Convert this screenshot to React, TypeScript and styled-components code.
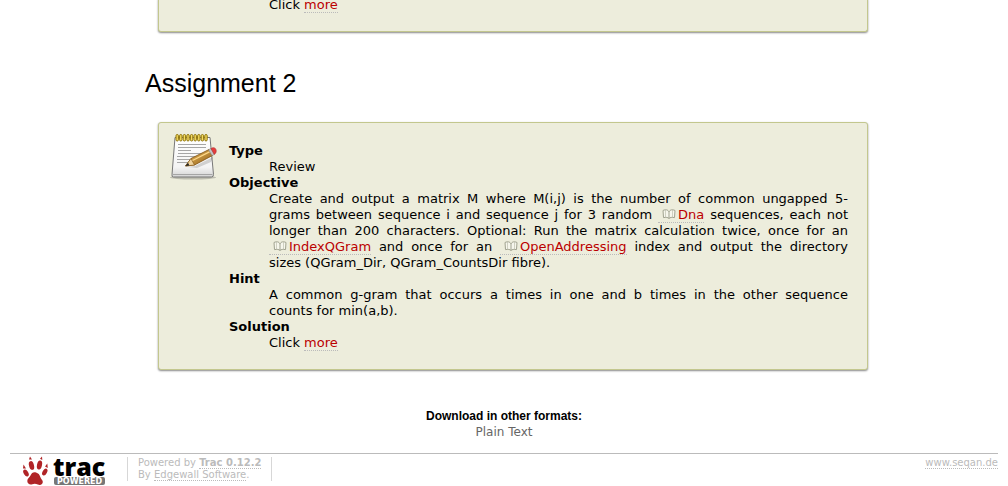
import React from "react";
import styled, { createGlobalStyle } from "styled-components";

const GlobalStyle = createGlobalStyle`
  body {
    margin: 0;
    background: #fff;
    color: #000;
    font: 13px/16px Verdana, "DejaVu Sans", sans-serif;
  }
`;

const Page = styled.div`
  padding: 0 10px;
  overflow: hidden;
`;

const Wiki = styled.main`
  margin: 0 130px 0 135px;
`;

const Card = styled.section<{ $continued?: boolean }>`
  display: flex;
  margin: 0 0 0 13px;
  padding: ${(p) => (p.$continued ? "0 19px 18px 11px" : "10px 19px 18px 11px")};
  margin-top: ${(p) => (p.$continued ? "-3px" : "0")};
  border: 1px solid #c3c78e;
  border-top-width: ${(p) => (p.$continued ? "0" : "1px")};
  border-radius: 3px;
  background: #ededdc;
  box-shadow: 0 1px 2px #888;
`;

const IconColumn = styled.div`
  flex: 0 0 59px;
`;

const Details = styled.dl<{ $continued?: boolean }>`
  flex: 1;
  margin: ${(p) => (p.$continued ? "0" : "10px 0 0")};
`;

const Term = styled.dt`
  font-weight: bold;
`;

const Description = styled.dd`
  margin: 0 0 0 40px;
`;

const Line = styled.span`
  display: block;
  text-align: justify;
  text-align-last: justify;
`;

const WikiLink = styled.a`
  color: #b00;
  text-decoration: none;
  white-space: nowrap;
  border-bottom: 1px dotted #bbb;
`;

const BookSvg = styled.svg`
  width: 14px;
  height: 10px;
  margin: 0 2px 0 4px;
`;

const Heading = styled.h2`
  margin: 36px 0 24px;
  font: 25px/30px Arial, "Liberation Sans", sans-serif;
`;

const Formats = styled.section`
  margin: 38px 0 13px;
  text-align: center;
`;

const FormatsTitle = styled.h3`
  margin: 0;
  font: bold 12px/16px Arial, "Liberation Sans", sans-serif;
`;

const FormatLink = styled.a`
  display: block;
  color: #666;
  font-size: 12px;
  text-decoration: none;
`;

const Footer = styled.footer`
  display: flex;
  align-items: flex-start;
  border-top: 1px solid #bbb;
  padding-top: 2px;
  color: #bbb;
  font-size: 10px;
  line-height: 12px;
`;

const Logo = styled.a`
  display: block;
  width: 107px;
  height: 30px;
`;

const Powered = styled.p`
  margin: 1px 0 0 10px;
  padding: 0 10px;
  border: solid #d7d7d7;
  border-width: 0 1px;
`;

const Site = styled.p`
  margin: 1px 0 0 auto;
`;

const FooterLink = styled.a`
  color: #bbb;
  text-decoration: none;
  border-bottom: 1px dotted #bbb;
`;

const Book = () => (
  <BookSvg viewBox="0 0 14 10" fill="#f6f6ec" stroke="#a0a28f" strokeLinejoin="round" aria-hidden="true">
    <path d="M7 9.500C6 8.300 4 8.200 1.500 8.600L1 1.500C3.500 .3 6 .5 7 3 8 .5 10.500 .3 13 1.500l-.5 7.100C10 8.200 8 8.300 7 9.500z" />
    <path d="M7 3v6.500" />
    <path d="M3.500 1.200V8M10.500 1.200V8" strokeOpacity=".45" />
  </BookSvg>
);

const NotepadIcon = () => (
  <svg width="48" height="48" viewBox="0 0 48 48" aria-hidden="true">
    <defs>
      <linearGradient id="paper" x2="0" y2="1">
        <stop stopColor="#fff" />
        <stop offset=".75" stopColor="#f4f4f4" />
        <stop offset="1" stopColor="#d4d4d4" />
      </linearGradient>
      <linearGradient id="wood" x2="1" y2="1">
        <stop stopColor="#f0c266" />
        <stop offset="1" stopColor="#8e5b13" />
      </linearGradient>
    </defs>
    <ellipse cx="23" cy="44.500" rx="23" ry="2" fill="#000" opacity=".2" />
    <path d="M5 4.500h35l3.500 37q0 2.500-2 2.500h-38q-2 0-1.500-2.500z" fill="url(#paper)" stroke="#777" />
    <path d="M2.500 41.500h40" stroke="#a5a5a5" />
    <path d="M8 11.500h28M8 14.500h28M8 17.500h13M8 20.500h28M7 23.500h22M7 26.500h18M7 29.500h11" stroke="#a6a6a6" />
    {Array.from({ length: 9 }, (_, i) => (
      <rect key={i} x={6 + i * 3.6} y="1.500" width="2.400" height="6.500" rx="1.200" fill="#f4db62" stroke="#8f7408" />
    ))}
    <path d="M17 34l8-1 18-9-2 5-14 6z" fill="#000" opacity=".15" />
    <path d="M15.500 33l5.500-7.500 18-9 3.500 6-18 9.500z" fill="url(#wood)" stroke="#80500f" strokeWidth=".8" />
    <path d="M22 27.800l18-9.200" stroke="#ffd98a" strokeWidth="1.200" />
    <path d="M15.500 33l5.500-7.500 3.500 6.500z" fill="#efd29b" stroke="#80500f" strokeWidth=".6" />
    <path d="M15.500 33l2.500-3.200 1.400 2.600z" fill="#222" />
    <path d="M38.500 16.700l2.500-1.200 3.300 5.900-2.300 1.300z" fill="#c4c4c4" stroke="#777" strokeWidth=".5" />
    <path d="M41 15.500l1.500-.7c3-1 5 3 2.800 5.800l-1 .8z" fill="#e63c3c" stroke="#a33" strokeWidth=".6" />
  </svg>
);

const TracLogo = () => (
  <svg width="107" height="30" viewBox="0 0 107 30" role="img" aria-label="Trac Powered">
    <g fill="#b02427">
      <path d="M26 16.500c-2.500-.8-4.500.5-5.500 3-.8 2-3.200 3-3.200 5.500 0 2.800 2.700 4.200 5 3.200 2-.9 3.700-.6 5.500.3 2.500 1.200 5.200-.2 5-2.800-.1-1.900-2-2.700-2.500-4.700-.6-2.400-2-3.800-4.300-4.500z" />
      <ellipse cx="21.500" cy="9.500" rx="2.500" ry="4.500" transform="rotate(-14 21.500 9.500)" />
      <ellipse cx="29.500" cy="9" rx="2.500" ry="4.500" transform="rotate(12 29.500 9)" />
      <ellipse cx="16" cy="17" rx="2.200" ry="3.800" transform="rotate(-32 16 17)" />
      <ellipse cx="34.800" cy="16" rx="2.200" ry="3.800" transform="rotate(28 34.800 16)" />
      <path d="M19 3.500l1-3 2 3zM30 2.800l2-2.300.3 3.500zM13 12.500l.5-4 2.500 4zM35 10.500l2.300-3 .5 4.500z" />
    </g>
    <text x="43" y="20" fontFamily="Open Sans, sans-serif" fontWeight="800" fontSize="25">trac</text>
    <rect x="44" y="21" width="51" height="8" rx="2" fill="#777" />
    <text x="47" y="28" fontFamily="DejaVu Sans, sans-serif" fontSize="8" fill="#fff" fontWeight="bold">POWERED</text>
  </svg>
);

export default function App() {
  return (
    <>
      <GlobalStyle />
      <Page>
        <Wiki>
          <Card $continued>
            <IconColumn />
            <Details $continued>
              <Description>
                Click <WikiLink href="#solution-1">more</WikiLink>
              </Description>
            </Details>
          </Card>
          <Heading>Assignment 2</Heading>
          <Card>
            <IconColumn>
              <NotepadIcon />
            </IconColumn>
            <Details>
              <Term>Type</Term>
              <Description>Review</Description>
              <Term>Objective</Term>
              <Description>
                <Line>Create and output a matrix M where M(i,j) is the number of common ungapped 5-</Line>
                <Line>
                  grams between sequence i and sequence j for 3 random{" "}
                  <WikiLink href="#dna"><Book />Dna</WikiLink> sequences, each not
                </Line>
                <Line>longer than 200 characters. Optional: Run the matrix calculation twice, once for an</Line>
                <Line>
                  <WikiLink href="#index-qgram"><Book />IndexQGram</WikiLink> and once for an{" "}
                  <WikiLink href="#open-addressing"><Book />OpenAddressing</WikiLink> index and output
                  the directory
                </Line>
                sizes (QGram_Dir, QGram_CountsDir fibre).
              </Description>
              <Term>Hint</Term>
              <Description>
                <Line>A common g-gram that occurs a times in one and b times in the other sequence</Line>
                counts for min(a,b).
              </Description>
              <Term>Solution</Term>
              <Description>
                Click <WikiLink href="#solution-2">more</WikiLink>
              </Description>
            </Details>
          </Card>
        </Wiki>
        <Formats>
          <FormatsTitle>Download in other formats:</FormatsTitle>
          <FormatLink href="#plain-text">Plain Text</FormatLink>
        </Formats>
        <Footer>
          <Logo href="#trac">
            <TracLogo />
          </Logo>
          <Powered>
            Powered by <FooterLink href="#about"><strong>Trac 0.12.2</strong></FooterLink>
            <br />
            By <FooterLink href="#edgewall">Edgewall Software</FooterLink>.
          </Powered>
          <Site>
            <FooterLink href="#seqan">www.seqan.de</FooterLink>
          </Site>
        </Footer>
      </Page>
    </>
  );
}
